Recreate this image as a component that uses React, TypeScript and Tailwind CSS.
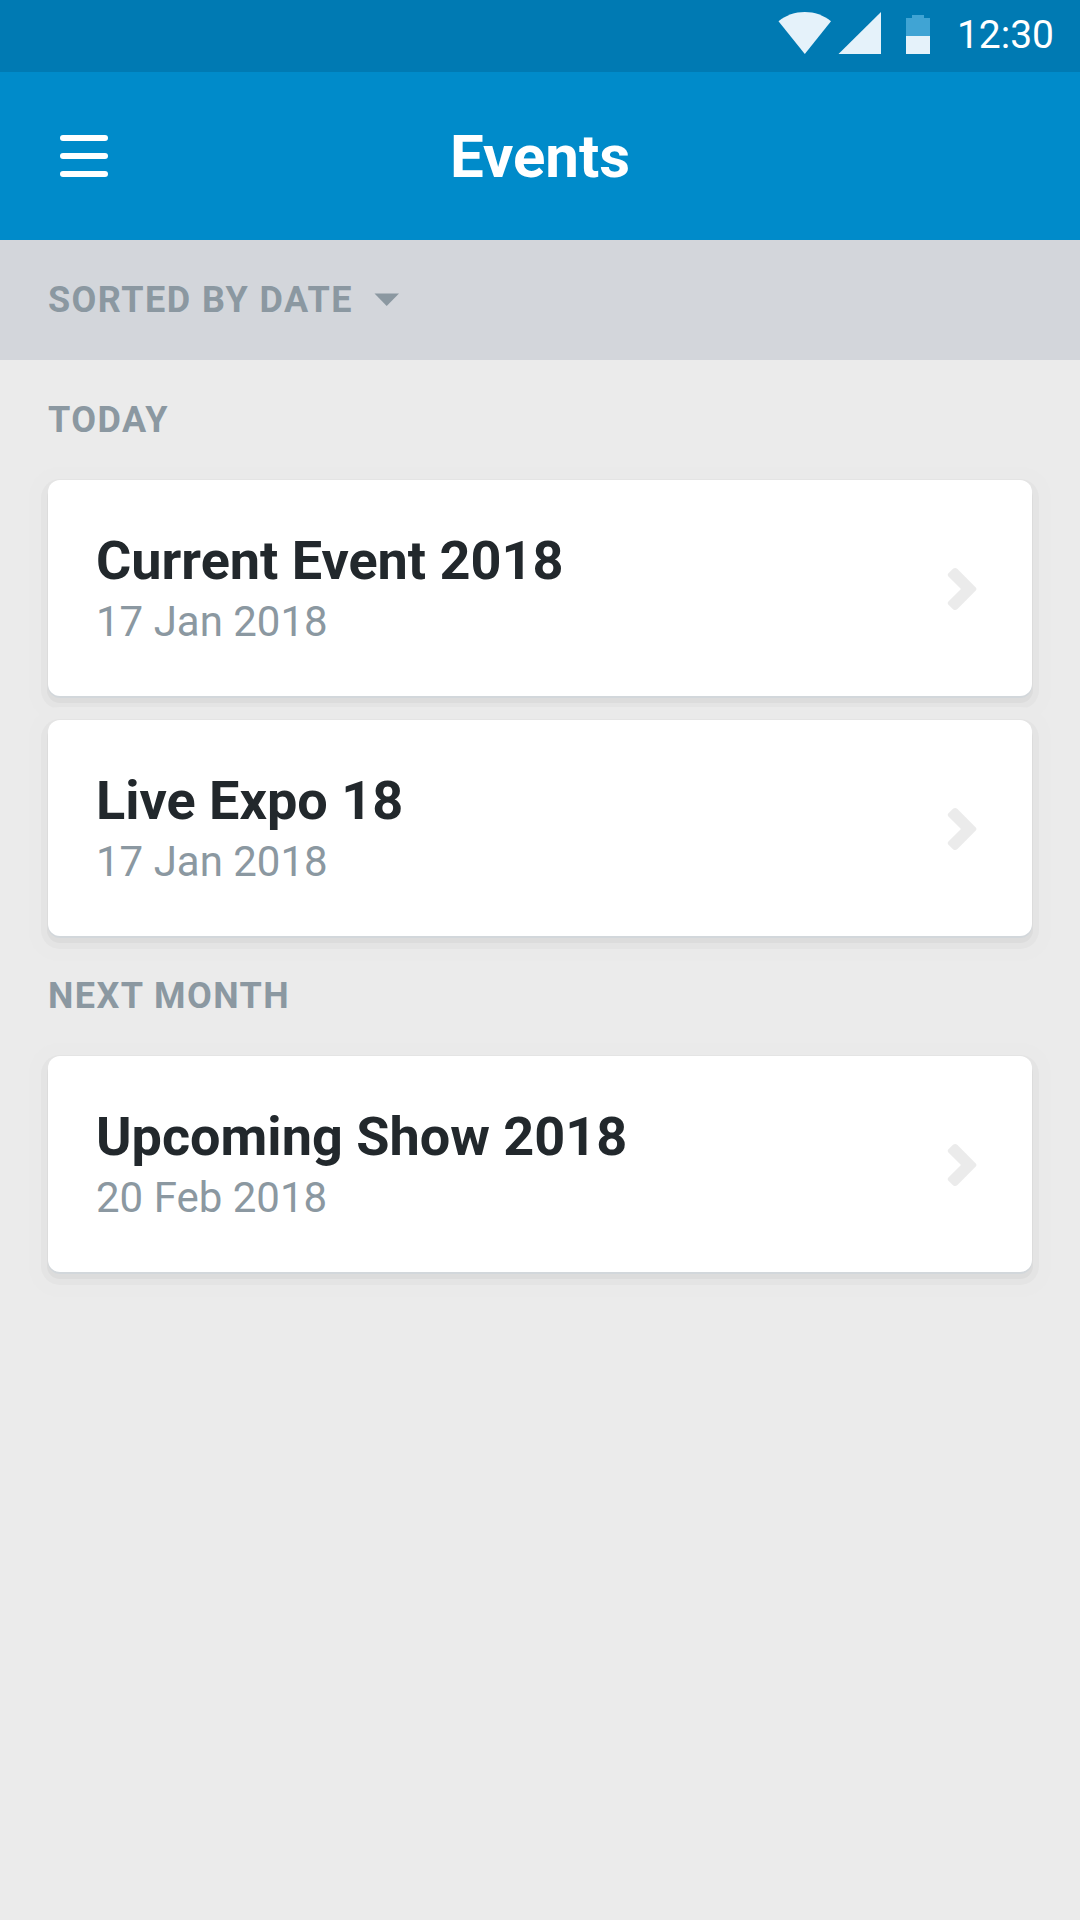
type EventItem = { title: string; date: string };
type Section = { label: string; events: EventItem[] };

const sections: Section[] = [
  {
    label: "TODAY",
    events: [
      { title: "Current Event 2018", date: "17 Jan 2018" },
      { title: "Live Expo 18", date: "17 Jan 2018" },
    ],
  },
  {
    label: "NEXT MONTH",
    events: [{ title: "Upcoming Show 2018", date: "20 Feb 2018" }],
  },
];

function StatusBar() {
  return (
    <div className="flex h-[72px] items-center justify-end bg-[#007ab3] pr-[26px] text-white">
      <svg width="152" height="72" viewBox="778 0 152 72" className="mr-[27px] shrink-0">
        <path d="M778.5 21.2C786 15.2 795 12 804.8 12S823.500 15.200 831 21.200L804.800 54Z" fill="#e5f2fa" />
        <path d="M838.500 54L881 12V54Z" fill="#e5f2fa" />
        <path d="M912 15H924V18H930V36H906V18H912Z" fill="#40a4d4" />
        <path d="M906 36H930V54H906Z" fill="#e5f2fa" />
      </svg>
      <span className="text-[39px] leading-[70px] -translate-y-px">12:30</span>
    </div>
  );
}

function Header() {
  return (
    <header className="grid h-[168px] grid-cols-[1fr_auto_1fr] items-center bg-[#008bca] px-[60px]">
      <button aria-label="Menu" className="flex w-12 flex-col gap-3">
        <span className="h-1.5 rounded-full bg-white" />
        <span className="h-1.5 rounded-full bg-white" />
        <span className="h-1.5 rounded-full bg-white" />
      </button>
      <h1 className="pt-0.5 text-[60px] leading-[72px] font-bold text-white">Events</h1>
    </header>
  );
}

function EventCard({ title, date }: EventItem) {
  return (
    <li className="flex h-[216px] items-start justify-between rounded-[12px] bg-white pl-12 shadow-[0_2px_0_0_#d2d7db,0_6px_0_1px_#dcdcdc,0_6px_0_7px_#e4e4e4,0_6px_0_19px_#eaeaea]">
      <div className="pt-[50px]">
        <h3 className="text-[54px] leading-[62px] font-bold text-[#22282c]">{title}</h3>
        <p className="text-[42px] leading-[60px] text-[#8b98a1]">{date}</p>
      </div>
      <svg width="30" height="44" viewBox="0 0 30 44" className="mt-[87px] mr-[55px] shrink-0">
        <path
          d="M1.200 6.600L6.300 1.600Q8.300 0.300 10.200 1.800L29 20.800Q30 22 29 23.200L10.200 42.200Q8.300 43.700 6.300 42.400L1.200 37.400Q0.100 36.100 1.200 34.800L14 22L1.200 9.200Q0.100 7.900 1.200 6.600Z"
          fill="#ebebeb"
        />
      </svg>
    </li>
  );
}

export default function App() {
  return (
    <div className="min-h-[1920px] w-[1080px] bg-[#ebebeb] font-['Roboto',sans-serif]">
      <StatusBar />
      <Header />
      <button className="flex h-[120px] w-full items-center bg-[#d3d6db] px-12 text-[36px] leading-[120px] font-bold tracking-[1.44px] text-[#8b98a1]">
        SORTED BY DATE
        <svg width="26" height="14" viewBox="0 0 26 14" className="ml-[21px]">
          <path d="M0.500 0.500H25L12.700 13Z" fill="#8b98a1" />
        </svg>
      </button>
      <main className="px-12">
        {sections.map((section) => (
          <section key={section.label}>
            <h2 className="relative z-10 h-[120px] text-[36px] leading-[120px] font-bold tracking-[1.44px] text-[#8b98a1]">
              {section.label}
            </h2>
            <ul className="flex flex-col gap-6">
              {section.events.map((event) => (
                <EventCard key={event.title} {...event} />
              ))}
            </ul>
          </section>
        ))}
      </main>
    </div>
  );
}
